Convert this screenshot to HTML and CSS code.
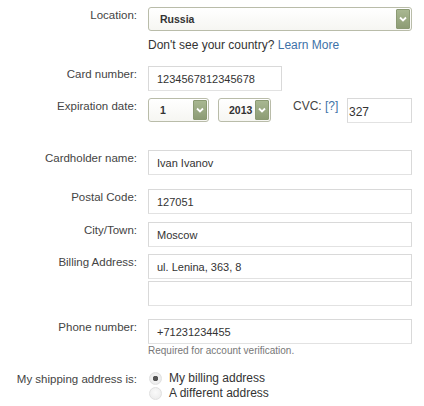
FILE: index.html
```html
<!DOCTYPE html>
<html lang="en">

<head>
    <meta charset="UTF-8">
    <title>Billing</title>
    <link rel="stylesheet" href="styles.css">
</head>

<body>
    <form class="billing-form">
        <div class="row row-location">
            <label>Location:</label>
            <div class="select select-wide">
                <span class="select-value">Russia</span>
                <span class="select-arrow"><svg width="8" height="6" viewBox="0 0 8 6"><path d="M1 1.5 L4 4.5 L7 1.5" fill="none" stroke="#fff" stroke-width="1.8"/></svg></span>
            </div>
        </div>
        <div class="row row-hint">
            <span></span>
            <p class="hint">Don't see your country? <a href="#">Learn More</a></p>
        </div>
        <div class="row row-card">
            <label>Card number:</label>
            <input class="text-input input-card" type="text" value="1234567812345678">
        </div>
        <div class="row row-expiry">
            <label>Expiration date:</label>
            <div class="expiry">
                <div class="select select-month">
                    <span class="select-value">1</span>
                    <span class="select-arrow"><svg width="8" height="6" viewBox="0 0 8 6"><path d="M1 1.5 L4 4.5 L7 1.5" fill="none" stroke="#fff" stroke-width="1.8"/></svg></span>
                </div>
                <div class="select select-year">
                    <span class="select-value">2013</span>
                    <span class="select-arrow"><svg width="8" height="6" viewBox="0 0 8 6"><path d="M1 1.5 L4 4.5 L7 1.5" fill="none" stroke="#fff" stroke-width="1.8"/></svg></span>
                </div>
                <span class="cvc-label">CVC: <a href="#">[?]</a></span>
                <input class="text-input input-cvc" type="text" value="327">
            </div>
        </div>
        <div class="row row-name">
            <label>Cardholder name:</label>
            <input class="text-input" type="text" value="Ivan Ivanov">
        </div>
        <div class="row row-postal">
            <label>Postal Code:</label>
            <input class="text-input" type="text" value="127051">
        </div>
        <div class="row row-city">
            <label>City/Town:</label>
            <input class="text-input" type="text" value="Moscow">
        </div>
        <div class="row row-address">
            <label>Billing Address:</label>
            <input class="text-input" type="text" value="ul. Lenina, 363, 8">
        </div>
        <div class="row row-address2">
            <span></span>
            <input class="text-input" type="text" value="">
        </div>
        <div class="row row-phone">
            <label>Phone number:</label>
            <input class="text-input" type="text" value="+71231234455">
        </div>
        <div class="row row-note">
            <span></span>
            <p class="note">Required for account verification.</p>
        </div>
        <div class="row row-shipping">
            <label>My shipping address is:</label>
            <div class="radios">
                <label class="radio"><input type="radio" name="ship" checked> My billing address</label>
                <label class="radio"><input type="radio" name="ship"> A different address</label>
            </div>
        </div>
    </form>
</body>

</html>
```

FILE: styles.css
```css
* {
    margin: 0;
    padding: 0;
    box-sizing: border-box;
}

body {
    font-family: 'Liberation Sans', Arial, sans-serif;
    font-size: 11.5px;
    color: #444;
    background: #fff;
}

.billing-form {
    width: 424px;
    padding-top: 7px;
}

.row {
    display: grid;
    grid-template-columns: 137px 264px;
    column-gap: 11px;
    align-items: start;
}

.row > label {
    text-align: right;
    line-height: 16px;
}

a {
    color: #3d72a8;
    text-decoration: none;
}

/* selects */
.select {
    display: flex;
    align-items: center;
    justify-content: space-between;
    height: 24px;
    border: 1px solid #b9bca9;
    border-radius: 3px;
    background: linear-gradient(to bottom, #ffffff 0%, #f6f6f2 100%);
    padding: 1px 1px 1px 11px;
}

.select-value {
    font-weight: bold;
    font-size: 10.5px;
    color: #333;
}

.select-arrow {
    flex-shrink: 0;
    width: 14px;
    height: 20px;
    display: flex;
    align-items: center;
    justify-content: center;
    background: linear-gradient(to bottom, #a8b791 0%, #8d9c75 100%);
    border: 1px solid #8b9a73;
    border-radius: 1px;
}

.select-month {
    width: 61px;
}

.select-year {
    width: 53px;
    margin-left: 9px;
    padding-left: 10px;
}

/* inputs */
.text-input {
    height: 25px;
    width: 264px;
    border: 1px solid #d9d9d9;
    border-bottom-color: #e2e2e2;
    padding: 0 8px;
    font-family: 'Liberation Sans', Arial, sans-serif;
    font-size: 11px;
    color: #333;
    background: #fff;
    outline: none;
}

.input-card {
    width: 134px;
}

.row-hint {
    margin-top: 6px;
}

.hint {
    font-size: 12px;
    line-height: 16px;
    color: #333;
}

.row-card {
    margin-top: 13px;
}

.row-expiry {
    margin-top: 7px;
}

.expiry {
    display: flex;
    align-items: flex-start;
}

.cvc-label {
    margin-left: 22px;
    line-height: 16px;
    width: 54px;
    font-size: 12px;
}

.input-cvc {
    width: 65px;
    padding: 2px 1px 0;
    font-size: 12px;
}

.row-name {
    margin-top: 27px;
}

.row-postal {
    margin-top: 14px;
}

.row-city {
    margin-top: 8px;
}

.row-address {
    margin-top: 7px;
}

.row-address2 {
    margin-top: 2px;
}

.row-phone {
    margin-top: 13px;
}

.row-note {
    margin-top: 1px;
}

.note {
    font-size: 10px;
    line-height: 12px;
    color: #777;
}

.row-shipping {
    margin-top: 14px;
}

.radios {
    display: flex;
    flex-direction: column;
}

.radio {
    display: flex;
    align-items: center;
    gap: 7px;
    font-size: 12px;
    line-height: 15px;
    color: #333;
}

.radio input {
    appearance: none;
    width: 13px;
    height: 13px;
    border-radius: 50%;
    border: 1px solid #e0e0e0;
    background: radial-gradient(circle at 50% 40%, #fafafa 0%, #e9e9e9 100%);
    margin-left: 1px;
}

.radio input:checked {
    background: radial-gradient(circle, #555 0 2.5px, #f2f2f2 3px, #e6e6e6 100%);
}
```
